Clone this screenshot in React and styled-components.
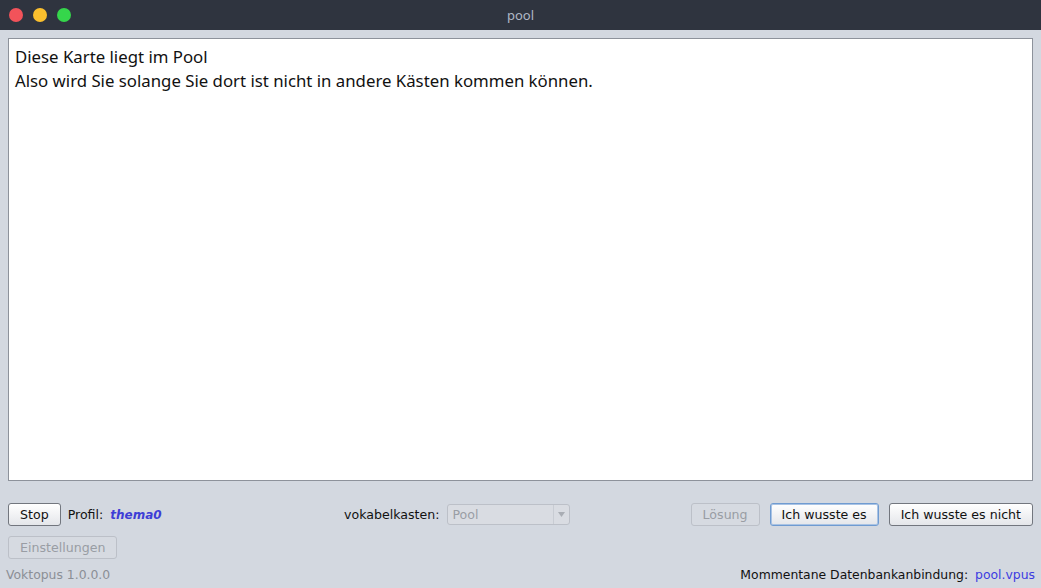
import React from 'react';
import styled, { createGlobalStyle, css } from 'styled-components';

const GlobalStyle = createGlobalStyle`
  html, body {
    margin: 0;
    padding: 0;
    background: #d3d8e0;
  }
  body {
    font-family: "DejaVu Sans", sans-serif;
  }
  * {
    box-sizing: border-box;
  }
`;

const Window = styled.div`
  width: 1041px;
  height: 588px;
  display: flex;
  flex-direction: column;
  background: #d3d8e0;
  overflow: hidden;
`;

const TitleBar = styled.header`
  height: 30px;
  flex: none;
  background: #2f343f;
  display: flex;
  align-items: center;
  position: relative;
`;

const Lights = styled.div`
  display: flex;
  gap: 10px;
  padding-left: 9px;
`;

const Light = styled.span`
  width: 14px;
  height: 14px;
  border-radius: 50%;
  background: ${props => props.color};
`;

const Title = styled.div`
  position: absolute;
  left: 0;
  right: 0;
  text-align: center;
  color: #afb8c6;
  font-family: "Noto Sans", sans-serif;
  font-size: 13px;
  pointer-events: none;
`;

const Body = styled.main`
  flex: 1;
  display: flex;
  flex-direction: column;
  padding: 8px 8px 0 8px;
`;

const TextArea = styled.div`
  height: 443px;
  flex: none;
  background: #ffffff;
  border: 1px solid #8d929b;
  padding: 6px 6px;
  font-family: "Noto Sans", sans-serif;
  font-size: 16.8px;
  line-height: 24px;
  color: #111;
`;

const ControlRow = styled.div`
  display: grid;
  grid-template-columns: 336px auto 1fr auto;
  align-items: center;
  margin-top: 22px;
  height: 23px;
`;

const Group = styled.div`
  display: flex;
  align-items: center;
  gap: ${props => props.gap || 8}px;
`;

const Button = styled.button`
  font-family: "DejaVu Sans", sans-serif;
  font-size: 12.6px;
  height: 23px;
  padding: 0 ${props => props.pad || 11}px;
  border-radius: 3px;
  border: 1px solid #72767e;
  background: linear-gradient(#ffffff, #e4e6ea);
  color: #111;
  cursor: pointer;
  ${props => props.focused && css`
    border-color: #6f9bd1;
    box-shadow: inset 0 0 0 1px #a9c3e4;
  `}
  ${props => props.disabled && css`
    border-color: #bcc0c8;
    background: #d6dae1;
    color: #999da4;
  `}
`;

const Label = styled.span`
  font-size: 12.6px;
  color: #111;
`;

const Profile = styled.span`
  font-size: 12px;
  font-weight: bold;
  font-style: italic;
  color: #3e3ed6;
`;

const Combo = styled.div`
  width: 123px;
  height: 21px;
  display: flex;
  border: 1px solid #bcc0c8;
  border-radius: 3px;
  background: #d9dce2;
  color: #9a9ea5;
  font-size: 12.6px;
  align-items: center;
  overflow: hidden;
`;

const ComboValue = styled.span`
  flex: 1;
  padding-left: 4px;
`;

const ComboArrow = styled.span`
  width: 16px;
  height: 100%;
  border-left: 1px solid #c8ccd3;
  display: flex;
  align-items: center;
  justify-content: center;
`;

const SecondRow = styled.div`
  margin-top: 10px;
  display: flex;
`;

const Footer = styled.footer`
  display: flex;
  justify-content: space-between;
  align-items: center;
  margin: 8px -2px 0 -2px;
  font-size: 12.4px;
  line-height: 16px;
`;

const Version = styled.span`
  color: #8b8f96;
`;

const Connection = styled.span`
  color: #111;
  display: flex;
  gap: 7px;
`;

const LinkText = styled.span`
  color: #3c3ce0;
`;

export default function App() {
  return (
    <Window>
      <GlobalStyle />
      <TitleBar>
        <Lights>
          <Light color="#f2535a" />
          <Light color="#fbc02e" />
          <Light color="#35d64b" />
        </Lights>
        <Title>pool</Title>
      </TitleBar>
      <Body>
        <TextArea>
          Diese Karte liegt im Pool
          <br />
          Also wird Sie solange Sie dort ist nicht in andere Kästen kommen können.
        </TextArea>
        <ControlRow>
          <Group gap={7}>
            <Button pad={11}>Stop</Button>
            <Label>Profil:</Label>
            <Profile>thema0</Profile>
          </Group>
          <Group gap={8}>
            <Label>vokabelkasten:</Label>
            <Combo>
              <ComboValue>Pool</ComboValue>
              <ComboArrow>
                <svg width="7" height="5" viewBox="0 0 7 5">
                  <path d="M0 0 L7 0 L3.5 5 Z" fill="#a9adb4" />
                </svg>
              </ComboArrow>
            </Combo>
          </Group>
          <span />
          <Group gap={10}>
            <Button disabled pad={11}>Lösung</Button>
            <Button focused pad={11}>Ich wusste es</Button>
            <Button pad={11}>Ich wusste es nicht</Button>
          </Group>
        </ControlRow>
        <SecondRow>
          <Button disabled pad={11}>Einstellungen</Button>
        </SecondRow>
        <Footer>
          <Version>Voktopus 1.0.0.0</Version>
          <Connection>
            Mommentane Datenbankanbindung:
            <LinkText>pool.vpus</LinkText>
          </Connection>
        </Footer>
      </Body>
    </Window>
  );
}
